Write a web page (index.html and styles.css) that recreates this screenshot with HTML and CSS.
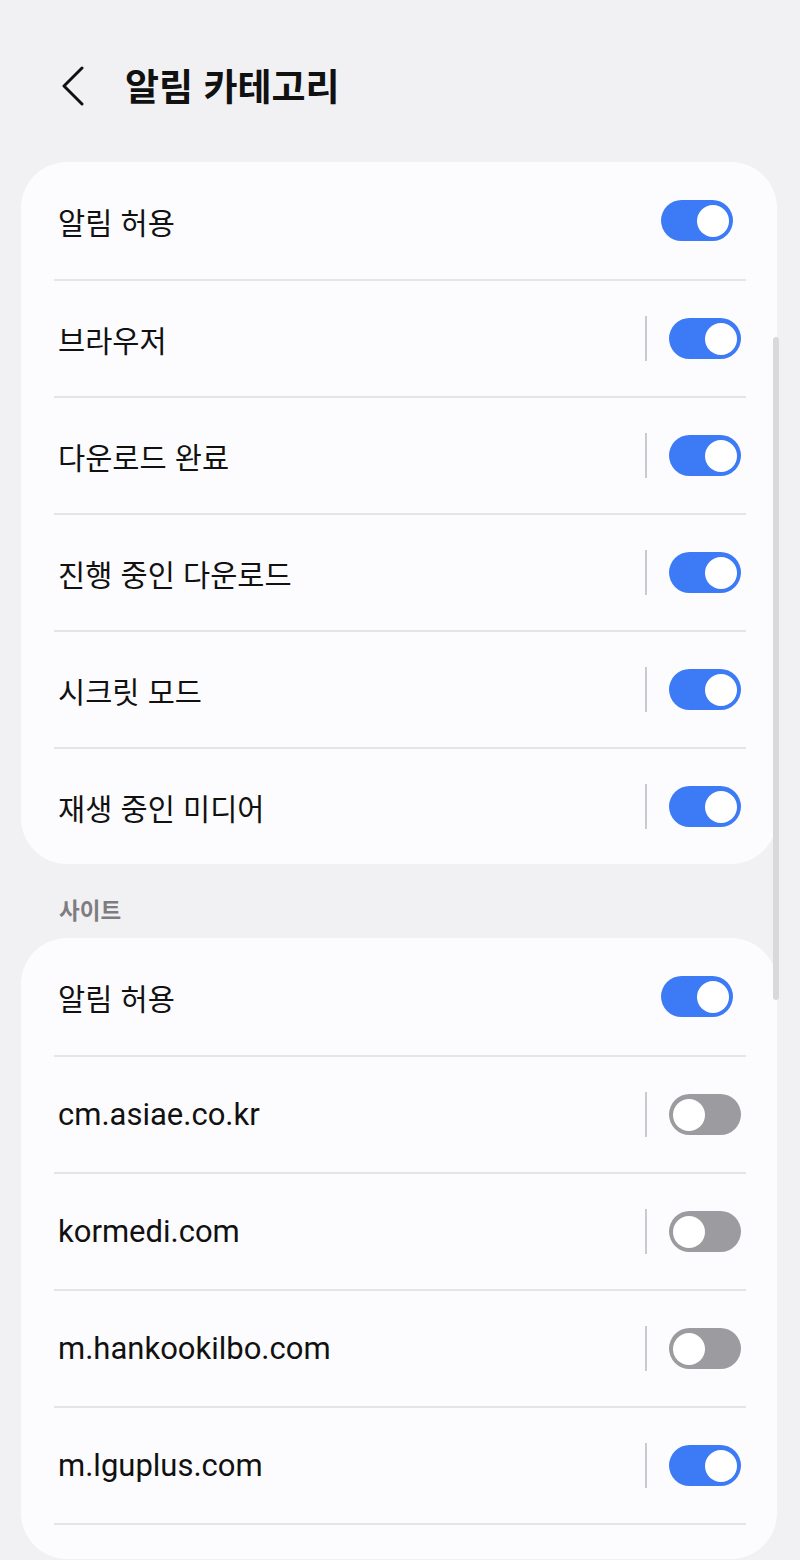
FILE: index.html
```html
<!DOCTYPE html>
<html lang="ko">
<head>
<meta charset="utf-8">
<title>알림 카테고리</title>
<link rel="stylesheet" href="styles.css">
</head>
<body>
<div class="page">
  <header class="header">
    <svg class="back" width="24" height="40" viewBox="0 0 24 40" aria-hidden="true">
      <path d="M21 2 L3 20 L21 38" fill="none" stroke="#111" stroke-width="3" stroke-linecap="round" stroke-linejoin="round"/>
    </svg>
    <h1 class="title">알림 카테고리</h1>
  </header>

  <section class="card">
    <div class="row master">
      <span class="label">알림 허용</span>
      <span class="toggle on"><span class="thumb"></span></span>
    </div>
    <div class="divider"></div>
    <div class="row">
      <span class="label">브라우저</span>
      <span class="sep"></span>
      <span class="toggle on"><span class="thumb"></span></span>
    </div>
    <div class="divider"></div>
    <div class="row">
      <span class="label">다운로드 완료</span>
      <span class="sep"></span>
      <span class="toggle on"><span class="thumb"></span></span>
    </div>
    <div class="divider"></div>
    <div class="row">
      <span class="label">진행 중인 다운로드</span>
      <span class="sep"></span>
      <span class="toggle on"><span class="thumb"></span></span>
    </div>
    <div class="divider"></div>
    <div class="row">
      <span class="label">시크릿 모드</span>
      <span class="sep"></span>
      <span class="toggle on"><span class="thumb"></span></span>
    </div>
    <div class="divider"></div>
    <div class="row">
      <span class="label">재생 중인 미디어</span>
      <span class="sep"></span>
      <span class="toggle on"><span class="thumb"></span></span>
    </div>
  </section>

  <div class="section-label">사이트</div>

  <section class="card card-sites">
    <div class="row master">
      <span class="label">알림 허용</span>
      <span class="toggle on"><span class="thumb"></span></span>
    </div>
    <div class="divider"></div>
    <div class="row">
      <span class="label lat">cm.asiae.co.kr</span>
      <span class="sep"></span>
      <span class="toggle off"><span class="thumb"></span></span>
    </div>
    <div class="divider"></div>
    <div class="row">
      <span class="label lat">kormedi.com</span>
      <span class="sep"></span>
      <span class="toggle off"><span class="thumb"></span></span>
    </div>
    <div class="divider"></div>
    <div class="row">
      <span class="label lat">m.hankookilbo.com</span>
      <span class="sep"></span>
      <span class="toggle off"><span class="thumb"></span></span>
    </div>
    <div class="divider"></div>
    <div class="row">
      <span class="label lat">m.lguplus.com</span>
      <span class="sep"></span>
      <span class="toggle on"><span class="thumb"></span></span>
    </div>
    <div class="divider"></div>
    <div class="row-tail"></div>
  </section>

  <div class="scrollbar"></div>
</div>
</body>
</html>
```

FILE: styles.css
```css
html, body {
  margin: 0;
  padding: 0;
  background: #f1f1f3;
}

body {
  font-family: "Roboto", "Noto Sans CJK KR", sans-serif;
  color: #111111;
  height: 1560px;
  overflow: hidden;
}

.page {
  position: relative;
  padding: 0 23px 0 21px;
}

.header {
  height: 162px;
  box-sizing: border-box;
  padding: 63px 0 0 40px;
  display: flex;
  align-items: flex-start;
}

.back {
  display: block;
  margin-top: 3px;
}

.title {
  margin: 0 0 0 40px;
  font-family: "Noto Sans CJK KR", sans-serif;
  font-size: 37px;
  font-weight: 700;
  line-height: 44px;
}

.card {
  background: #fcfcfe;
  border-radius: 46px;
}

.row {
  height: 115px;
  display: flex;
  align-items: center;
  padding: 0 36px 0 37px;
}

.row.master {
  height: 117px;
  padding-right: 44px;
}

.label {
  flex: 1;
  font-family: "Noto Sans CJK KR", sans-serif;
  font-size: 29.5px;
  line-height: 40px;
  color: #111111;
}

.label.lat {
  font-family: "Roboto", "Noto Sans CJK KR", sans-serif;
  font-size: 31px;
}

.sep {
  width: 1.5px;
  height: 45px;
  background: #cacace;
  margin-right: 22.5px;
}

.divider {
  height: 2px;
  background: #e5e5e8;
  margin: 0 31px 0 33px;
}

.row-tail {
  height: 34px;
}

.toggle {
  width: 72px;
  height: 41px;
  box-sizing: border-box;
  border-radius: 21px;
  padding: 0 4px;
  display: flex;
  align-items: center;
}

.toggle.on {
  background: #3d7bf6;
  justify-content: flex-end;
}

.toggle.off {
  background: #9c9ca0;
  justify-content: flex-start;
}

.thumb {
  width: 32px;
  height: 32px;
  border-radius: 50%;
  background: #ffffff;
}

.section-label {
  padding: 30px 0 14px 38px;
  font-family: "Noto Sans CJK KR", sans-serif;
  font-size: 22.5px;
  font-weight: 700;
  line-height: 30px;
  color: #7d7d81;
}

.scrollbar {
  position: absolute;
  left: 773px;
  top: 337px;
  width: 6px;
  height: 663px;
  border-radius: 3px;
  background: #d9d9dc;
}
```
